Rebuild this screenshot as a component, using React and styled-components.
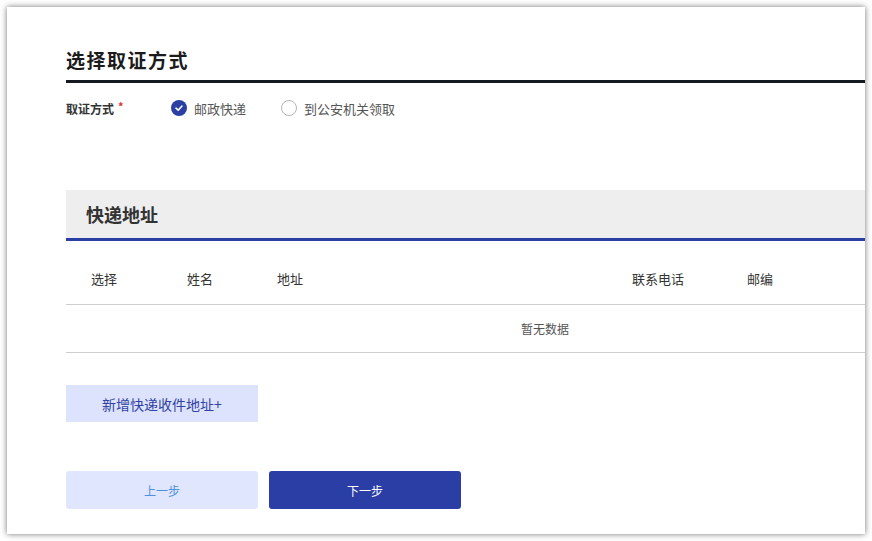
import styled, { createGlobalStyle } from "styled-components";

const GlobalStyle = createGlobalStyle`
  html, body {
    margin: 0;
    padding: 0;
    background: #ffffff;
  }
  body {
    font-family: "Noto Sans CJK SC", "Noto Sans", "Liberation Sans", sans-serif;
    color: #333;
  }
`;

const Frame = styled.div`
  padding: 7px 7px 7px 7px;
  height: 541px;
  box-sizing: border-box;
`;

const Panel = styled.div`
  background: #fff;
  height: 527px;
  overflow: hidden;
  box-shadow: 0 0 6px rgba(0, 0, 0, 0.55);
  padding: 39px 0 0 59px;
  box-sizing: border-box;
`;

const Content = styled.div`
  width: 958px;
`;

const Title = styled.h2`
  margin: 0;
  font-size: 19px;
  font-weight: 700;
  letter-spacing: 1.5px;
  line-height: 28px;
  color: #1b1b1b;
  padding-bottom: 6px;
  border-bottom: 3px solid #141a20;
`;

const FormRow = styled.div`
  display: flex;
  align-items: center;
  height: 20px;
  margin-top: 15px;
`;

const FieldLabel = styled.div`
  width: 105px;
  font-size: 12px;
  font-weight: 700;
  color: #333;
  display: flex;
  align-items: flex-start;
  gap: 4px;
`;

const Star = styled.span`
  color: #e0312f;
  font-size: 11px;
  line-height: 12px;
`;

const RadioGroup = styled.div`
  display: flex;
  align-items: center;
  gap: 35px;
`;

const RadioItem = styled.label`
  display: flex;
  align-items: center;
  gap: 7px;
  font-size: 13px;
  color: #555;
`;

const RadioCircle = styled.span`
  width: 16px;
  height: 16px;
  border-radius: 50%;
  box-sizing: border-box;
  display: flex;
  align-items: center;
  justify-content: center;
  background: ${({ checked }) => (checked ? "#2b3ea3" : "#fff")};
  border: ${({ checked }) => (checked ? "none" : "1px solid #b5b5b5")};
`;

const SectionHeader = styled.div`
  margin-top: 72px;
  height: 48px;
  background: #eeeeee;
  border-bottom: 3px solid #2b3ea3;
  display: flex;
  align-items: center;
  padding-left: 20px;
  font-size: 18px;
  font-weight: 700;
  color: #333;
`;

const Row = styled.div`
  display: grid;
  grid-template-columns: 96px 90px 355px 115px 1fr;
  align-items: end;
  height: ${({ h }) => h}px;
  padding-bottom: 16px;
  box-sizing: border-box;
  border-bottom: 1px solid #cfcfcf;
`;

const HeadCell = styled.div`
  padding-left: 25px;
  font-size: 13px;
  line-height: 18px;
  color: #333;
`;

const EmptyRow = styled.div`
  height: 48px;
  box-sizing: border-box;
  border-bottom: 1px solid #cfcfcf;
  display: flex;
  align-items: center;
  justify-content: center;
  font-size: 12px;
  color: #555;
`;

const Button = styled.button`
  width: 192px;
  height: ${({ variant }) => (variant === "add" ? "37px" : "38px")};
  border: none;
  border-radius: ${({ variant }) => (variant === "add" ? "0" : "3px")};
  font-family: inherit;
  font-size: ${({ variant }) => (variant === "add" ? "14px" : "12px")};
  cursor: pointer;
  background: ${({ variant }) =>
    variant === "primary" ? "#2b3ea5" : variant === "add" ? "#dde3fc" : "#e0e6fd"};
  color: ${({ variant }) =>
    variant === "primary" ? "#fff" : variant === "add" ? "#3142a3" : "#4f8fe2"};
`;

const AddWrap = styled.div`
  margin-top: 32px;
`;

const Actions = styled.div`
  margin-top: 49px;
  display: flex;
  gap: 11px;
`;

const CheckIcon = () => (
  <svg width="10" height="10" viewBox="0 0 10 10">
    <path d="M2 5.2 L4.2 7.2 L8 3" fill="none" stroke="#fff" strokeWidth="1.6" strokeLinecap="round" strokeLinejoin="round" />
  </svg>
);

const columns = ["选择", "姓名", "地址", "联系电话", "邮编"];

export default function App() {
  return (
    <>
      <GlobalStyle />
      <Frame>
        <Panel>
          <Content>
            <Title>选择取证方式</Title>
            <FormRow>
              <FieldLabel>
                取证方式<Star>*</Star>
              </FieldLabel>
              <RadioGroup>
                <RadioItem>
                  <RadioCircle checked>
                    <CheckIcon />
                  </RadioCircle>
                  邮政快递
                </RadioItem>
                <RadioItem>
                  <RadioCircle />
                  到公安机关领取
                </RadioItem>
              </RadioGroup>
            </FormRow>

            <SectionHeader>快递地址</SectionHeader>
            <Row h={64}>
              {columns.map((c) => (
                <HeadCell key={c}>{c}</HeadCell>
              ))}
            </Row>
            <EmptyRow>暂无数据</EmptyRow>

            <AddWrap>
              <Button variant="add">新增快递收件地址+</Button>
            </AddWrap>

            <Actions>
              <Button>上一步</Button>
              <Button variant="primary">下一步</Button>
            </Actions>
          </Content>
        </Panel>
      </Frame>
    </>
  );
}
